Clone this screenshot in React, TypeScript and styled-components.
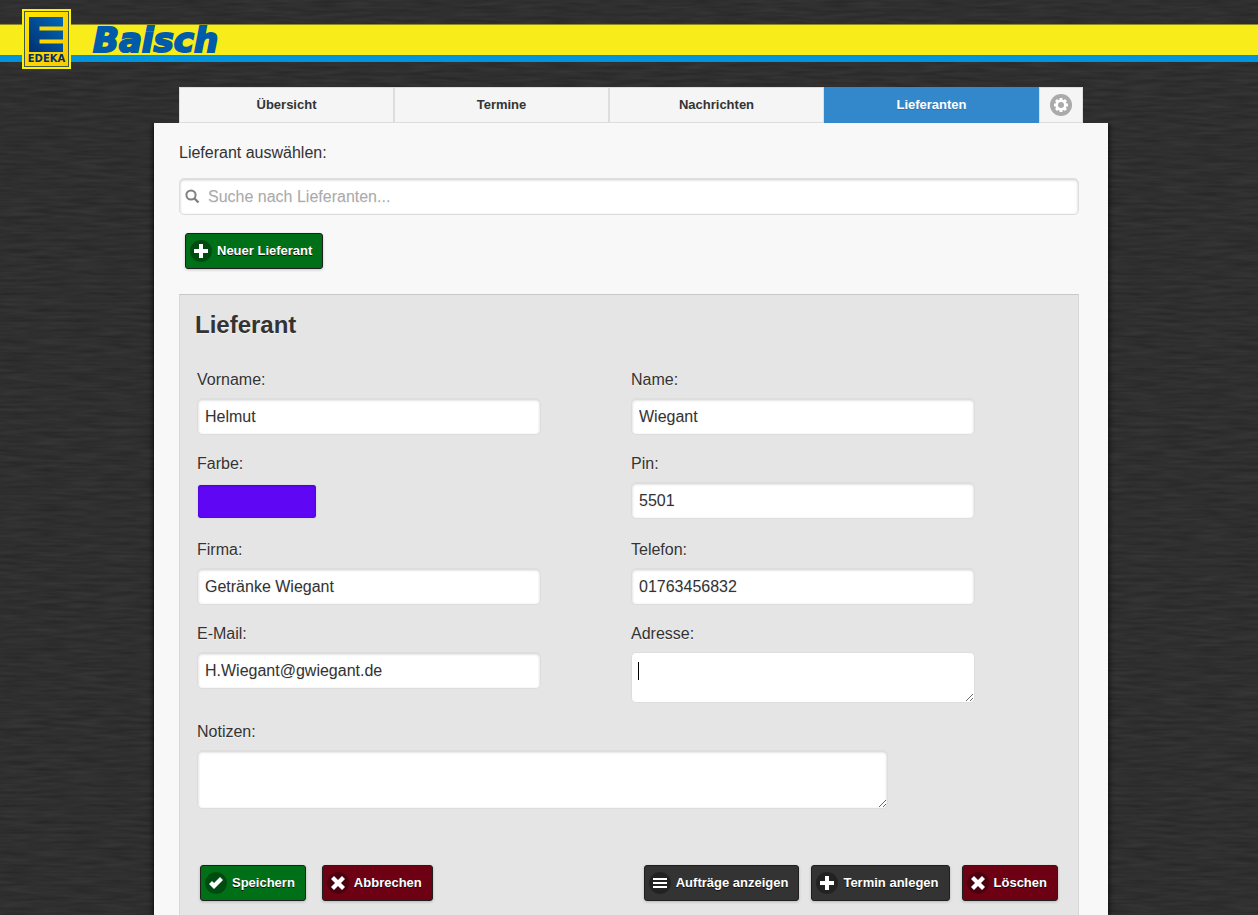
import React from 'react';
import styled, { createGlobalStyle, css } from 'styled-components';

const grain = `url("data:image/svg+xml,${encodeURIComponent(
  `<svg xmlns='http://www.w3.org/2000/svg' width='512' height='512'><filter id='g' x='0' y='0' width='100%' height='100%' color-interpolation-filters='sRGB'><feTurbulence type='fractalNoise' baseFrequency='0.03 0.3' numOctaves='2' seed='7' stitchTiles='stitch'/><feColorMatrix type='matrix' values='0.08 0 0 0 0.144  0.08 0 0 0 0.144  0.08 0 0 0 0.144  0 0 0 0 1'/></filter><rect width='512' height='512' fill='#2e2e2e' filter='url(#g)'/></svg>`
)}")`;

const GlobalStyle = createGlobalStyle`
  *, *::before, *::after { box-sizing: border-box; }
  html { background: #2e2e2e ${grain}; min-height: 100%; }
  body {
    margin: 0;
    color: #333;
    font: 16px/20px "Liberation Sans", Arial, sans-serif;
    text-shadow: 0 1px 0 #f3f3f3;
  }
  button, input, textarea { font: inherit; color: inherit; text-shadow: inherit; }
`;

const Header = styled.header`
  height: 87px;
  padding-top: 24px;
`;

const Band = styled.div`
  display: flex;
  align-items: center;
  height: 38px;
  padding-left: 22px;
  border-top: 1px solid #8f8a24;
  background: linear-gradient(#f9ec1b 30px, #0094de 30px);
`;

const Logo = styled.svg`
  flex: none;
  width: 49px;
  height: 60px;
  margin-bottom: 9px;
`;

const Brand = styled.span`
  margin-left: 22px;
  padding-bottom: 8px;
  color: #005baa;
  font: italic bold 34px/36px "DejaVu Sans", sans-serif;
  text-shadow: none;
  -webkit-text-stroke: 2px #005baa;
`;

const Page = styled.div`
  padding: 0 150px 0 154px;
`;

const Tabs = styled.nav`
  display: flex;
  height: 36px;
  padding: 0 25px;
`;

const Tab = styled.button<{ $active?: boolean; $icon?: boolean }>`
  flex: ${p => (p.$icon ? '0 0 44px' : '1')};
  display: flex;
  align-items: center;
  justify-content: center;
  padding: 0;
  border: 1px solid #ddd;
  background: #f5f5f5;
  font-size: 13px;
  font-weight: bold;
  cursor: pointer;
  ${p =>
    p.$active &&
    css`
      border-color: #3388cc;
      background: #3388cc;
      color: #fff;
      text-shadow: 0 1px 0 #3373a5;
    `}
`;

const Panel = styled.main`
  min-height: calc(100vh - 123px);
  padding: 20px 29px 0 25px;
  background: #f8f8f8;
  box-shadow: 0 0 6px #000;
  clip-path: inset(0 -8px -8px -8px);
`;

const Label = styled.label`
  display: block;
`;

const control = css`
  display: block;
  width: 100%;
  border: 1px solid #ddd;
  border-radius: 5px;
  background: #fff;
  box-shadow: inset 0 1px 3px rgba(0, 0, 0, 0.2);
  outline: 0;
`;

const SearchBox = styled.div`
  ${control}
  display: flex;
  align-items: center;
  height: 37px;
  margin-top: 15px;
  padding-left: 5px;
`;

const SearchInput = styled.input`
  flex: 1;
  min-width: 0;
  margin-left: 8px;
  padding: 0;
  border: 0;
  background: none;
  outline: 0;
  &::placeholder { color: #aaa; opacity: 1; }
`;

const tones = { green: '#007018', red: '#6e0014', dark: '#333' };

const ActionButton = styled.button<{ $tone: keyof typeof tones }>`
  display: inline-flex;
  align-items: center;
  gap: 5px;
  height: 36px;
  padding: 0 10px 0 4px;
  border: 1px solid #1f1f1f;
  border-radius: 3px;
  background: ${p => tones[p.$tone]};
  color: #fff;
  box-shadow: 0 1px 3px rgba(0, 0, 0, 0.2);
  font-size: 13px;
  font-weight: bold;
  text-shadow: 0 1px 0 #111;
  white-space: nowrap;
  cursor: pointer;
`;

const NewRow = styled.div`
  display: flex;
  padding: 18px 6px 25px;
`;

const Card = styled.form`
  padding: 20px 13px 15px 17px;
  border: 1px solid #d8d8d8;
  border-top-color: #c8c8c8;
  background: #e5e5e5;
`;

const Title = styled.h2`
  margin: 0 0 35px -2px;
  font-size: 24px;
  line-height: 20px;
`;

const Fields = styled.div`
  display: grid;
  grid-template-columns: 1fr 1fr;
  row-gap: 19px;
`;

const Field = styled.div<{ $wide?: boolean }>`
  display: flex;
  flex-direction: column;
  gap: 8px;
  min-width: 0;
  padding-right: 90px;
  ${p => p.$wide && css`grid-column: 1 / -1; padding-right: 177px;`}
`;

const TextInput = styled.input`
  ${control}
  height: 37px;
  padding: 0 7px;
`;

const ColorInput = styled.input`
  width: 120px;
  height: 35px;
  margin: 2px 0;
  padding: 0;
  border: 1px solid #ddd;
  border-radius: 3px;
  background: none;
  &::-webkit-color-swatch-wrapper { padding: 0; }
  &::-webkit-color-swatch { border: 0; border-radius: 2px; box-shadow: inset 0 1px 3px rgba(0, 0, 0, 0.2); }
`;

const TextArea = styled.textarea<{ $focused?: boolean; $tall?: boolean }>`
  ${control}
  height: ${p => (p.$tall ? 59 : 51)}px;
  padding: 7px;
  resize: both;
  ${p => p.$focused && css`box-shadow: none;`}
`;

const AreaFrame = styled.div`
  position: relative;
`;

const Caret = styled.span`
  position: absolute;
  top: 10px;
  left: 7px;
  width: 1px;
  height: 18px;
  background: #000;
`;

const Actions = styled.div`
  display: flex;
  flex-wrap: wrap;
  gap: 12px;
  margin-top: 56px;
  padding: 0 7px 0 3px;
`;

const MainActions = styled.div`
  display: flex;
  gap: 16px;
  margin-right: auto;
`;

const Glyph = styled.svg`
  flex: none;
`;

const paths = {
  plus: <path d="M9 4h4v5h5v4h-5v5H9v-5H4V9h5z" fill="#fff" />,
  check: <path d="M18 8l-3-3-6 6-2-2-3 3 5 5z" fill="#fff" />,
  cross: <path d="M18 7l-3-3-4 4-4-4-3 3 4 4-4 4 3 3 4-4 4 4 3-3-4-4z" fill="#fff" />,
  bars: <path d="M4 6h14v2H4zM4 10h14v2H4zM4 14h14v2H4z" fill="#fff" />,
};

const Icon = ({ name }: { name: keyof typeof paths }) => (
  <Glyph width="22" height="22" viewBox="0 0 22 22" aria-hidden="true">
    <circle cx="11" cy="11" r="11" fill="#000" fillOpacity=".32" />
    {paths[name]}
  </Glyph>
);

const Gear = () => (
  <Glyph width="22" height="22" viewBox="0 0 22 22" aria-hidden="true">
    <circle cx="11" cy="11" r="11" fill="#aaa" />
    <g fill="#fff">
      <circle cx="11" cy="11" r="5.600" />
      {[0, 45, 90, 135].map(a => (
        <rect key={a} x="9.500" y="4" width="3" height="14" rx=".5" transform={`rotate(${a} 11 11)`} />
      ))}
    </g>
    <circle cx="11" cy="11" r="3" fill="#aaa" />
  </Glyph>
);

const EdekaLogo = () => (
  <Logo viewBox="0 0 49 60" role="img" aria-label="EDEKA">
    <defs>
      <linearGradient id="frame" x1="0" y1="0" x2="1" y2="1">
        <stop offset="0" stopColor="#ffe600" />
        <stop offset="1" stopColor="#fcc800" />
      </linearGradient>
      <linearGradient id="letter" x1="1" y1="0" x2="0" y2="1">
        <stop offset="0" stopColor="#0068b8" />
        <stop offset="1" stopColor="#003070" />
      </linearGradient>
    </defs>
    <rect width="49" height="60" fill="#fff200" />
    <rect x="2.500" y="2.500" width="44" height="55" fill="url(#frame)" stroke="#3d5a50" />
    <path d="M7 8h34v9.500H17.500v4h23.500v9H17.500v4h23.500V43H7z" fill="url(#letter)" />
    <text x="24.500" y="53" textAnchor="middle" fill="#003070" fontFamily="DejaVu Sans" fontSize="10" fontWeight="bold" style={{ textShadow: 'none' }}>EDEKA</text>
  </Logo>
);

const TextField = ({ id, label, value }: { id: string; label: string; value: string }) => (
  <Field>
    <Label htmlFor={id}>{label}</Label>
    <TextInput id={id} defaultValue={value} />
  </Field>
);

export default function App() {
  return (
    <>
      <GlobalStyle />
      <Header>
        <Band>
          <EdekaLogo />
          <Brand>Baisch</Brand>
        </Band>
      </Header>
      <Page>
        <Tabs>
          <Tab type="button">Übersicht</Tab>
          <Tab type="button">Termine</Tab>
          <Tab type="button">Nachrichten</Tab>
          <Tab type="button" $active aria-current="page">Lieferanten</Tab>
          <Tab type="button" $icon aria-label="Einstellungen"><Gear /></Tab>
        </Tabs>
        <Panel>
          <Label htmlFor="suche">Lieferant auswählen:</Label>
          <SearchBox>
            <Glyph width="15" height="15" viewBox="0 0 15 15" fill="none" stroke="#808080" aria-hidden="true">
              <circle cx="6" cy="6" r="4.600" strokeWidth="2" />
              <path d="M9.500 9.500l4 4" strokeWidth="2.400" />
            </Glyph>
            <SearchInput id="suche" placeholder="Suche nach Lieferanten..." />
          </SearchBox>
          <NewRow>
            <ActionButton type="button" $tone="green"><Icon name="plus" />Neuer Lieferant</ActionButton>
          </NewRow>
          <Card onSubmit={e => e.preventDefault()}>
            <Title>Lieferant</Title>
            <Fields>
              <TextField id="vorname" label="Vorname:" value="Helmut" />
              <TextField id="name" label="Name:" value="Wiegant" />
              <Field>
                <Label htmlFor="farbe">Farbe:</Label>
                <ColorInput id="farbe" type="color" defaultValue="#5f06f5" />
              </Field>
              <TextField id="pin" label="Pin:" value="5501" />
              <TextField id="firma" label="Firma:" value="Getränke Wiegant" />
              <TextField id="telefon" label="Telefon:" value="01763456832" />
              <TextField id="email" label="E-Mail:" value="H.Wiegant@gwiegant.de" />
              <Field>
                <Label htmlFor="adresse">Adresse:</Label>
                <AreaFrame>
                  <TextArea id="adresse" $focused />
                  <Caret />
                </AreaFrame>
              </Field>
              <Field $wide>
                <Label htmlFor="notizen">Notizen:</Label>
                <TextArea id="notizen" $tall />
              </Field>
            </Fields>
            <Actions>
              <MainActions>
                <ActionButton type="submit" $tone="green"><Icon name="check" />Speichern</ActionButton>
                <ActionButton type="button" $tone="red"><Icon name="cross" />Abbrechen</ActionButton>
              </MainActions>
              <ActionButton type="button" $tone="dark"><Icon name="bars" />Aufträge anzeigen</ActionButton>
              <ActionButton type="button" $tone="dark"><Icon name="plus" />Termin anlegen</ActionButton>
              <ActionButton type="button" $tone="red"><Icon name="cross" />Löschen</ActionButton>
            </Actions>
          </Card>
        </Panel>
      </Page>
    </>
  );
}
